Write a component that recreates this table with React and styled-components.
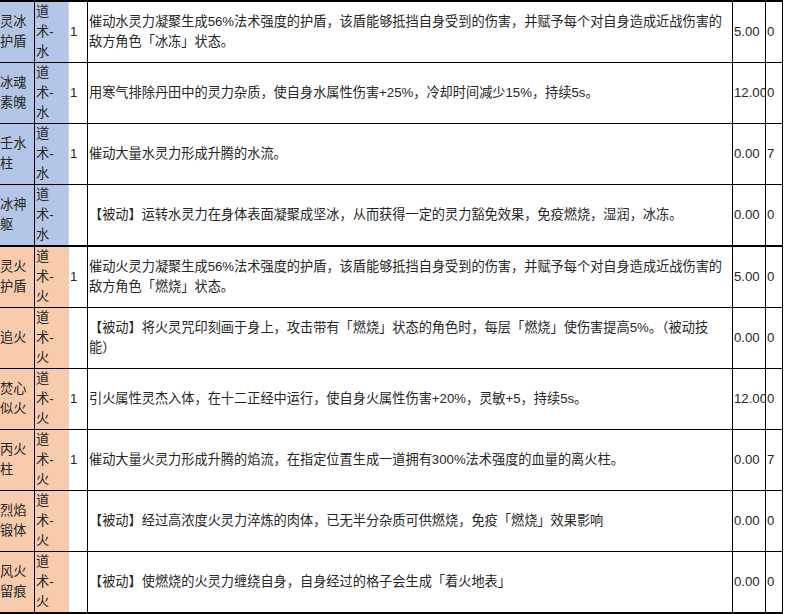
import React from "react";
import styled, { createGlobalStyle } from "styled-components";

const GlobalStyle = createGlobalStyle`
  body {
    margin: 0;
    background: #fff;
  }
`;

const groups = [
  {
    tone: "#B4C6E7",
    element: "水",
    skills: [
      {
        name: ["灵冰", "护盾"],
        level: "1",
        desc: [
          "催动水灵力凝聚生成56%法术强度的护盾，该盾能够抵挡自身受到的伤害，并赋予每个对自身造成近战伤害的",
          "敌方角色「冰冻」状态。",
        ],
        cd: "5.00",
        range: "0",
      },
      {
        name: ["冰魂", "素魄"],
        level: "1",
        desc: ["用寒气排除丹田中的灵力杂质，使自身水属性伤害+25%，冷却时间减少15%，持续5s。"],
        cd: "12.00",
        range: "0",
      },
      {
        name: ["壬水", "柱"],
        level: "1",
        desc: ["催动大量水灵力形成升腾的水流。"],
        cd: "0.00",
        range: "7",
      },
      {
        name: ["冰神", "躯"],
        level: "",
        desc: ["【被动】运转水灵力在身体表面凝聚成坚冰，从而获得一定的灵力豁免效果，免疫燃烧，湿润，冰冻。"],
        cd: "0.00",
        range: "0",
      },
    ],
  },
  {
    tone: "#F8CBAD",
    element: "火",
    skills: [
      {
        name: ["灵火", "护盾"],
        level: "1",
        desc: [
          "催动火灵力凝聚生成56%法术强度的护盾，该盾能够抵挡自身受到的伤害，并赋予每个对自身造成近战伤害的",
          "敌方角色「燃烧」状态。",
        ],
        cd: "5.00",
        range: "0",
      },
      {
        name: ["追火"],
        level: "",
        desc: [
          "【被动】将火灵咒印刻画于身上，攻击带有「燃烧」状态的角色时，每层「燃烧」使伤害提高5%。（被动技",
          "能）",
        ],
        cd: "0.00",
        range: "0",
      },
      {
        name: ["焚心", "似火"],
        level: "1",
        desc: ["引火属性灵杰入体，在十二正经中运行，使自身火属性伤害+20%，灵敏+5，持续5s。"],
        cd: "12.00",
        range: "0",
      },
      {
        name: ["丙火", "柱"],
        level: "1",
        desc: ["催动大量火灵力形成升腾的焰流，在指定位置生成一道拥有300%法术强度的血量的离火柱。"],
        cd: "0.00",
        range: "7",
      },
      {
        name: ["烈焰", "锻体"],
        level: "",
        desc: ["【被动】经过高浓度火灵力淬炼的肉体，已无半分杂质可供燃烧，免疫「燃烧」效果影响"],
        cd: "0.00",
        range: "0",
      },
      {
        name: ["风火", "留痕"],
        level: "",
        desc: ["【被动】使燃烧的火灵力缠绕自身，自身经过的格子会生成「着火地表」"],
        cd: "0.00",
        range: "0",
      },
    ],
  },
];

function Lines({ lines }) {
  return (
    <span>
      {lines.map((line, i) => (
        <React.Fragment key={i}>
          {i > 0 && <br />}
          {line}
        </React.Fragment>
      ))}
    </span>
  );
}

export default function App() {
  return (
    <>
      <GlobalStyle />
      <Sheet>
        {groups.map((group) =>
          group.skills.map((skill, i) => (
            <Row key={skill.name.join("")} $end={i === group.skills.length - 1}>
              <NameCell $tone={group.tone}>
                <Lines lines={skill.name} />
              </NameCell>
              <TypeCell $tone={group.tone}>
                <Lines lines={["道", "术-", group.element]} />
              </TypeCell>
              <Cell>{skill.level}</Cell>
              <DescCell>
                <Lines lines={skill.desc} />
              </DescCell>
              <Cell>{skill.cd}</Cell>
              <Cell>{skill.range}</Cell>
            </Row>
          ))
        )}
      </Sheet>
    </>
  );
}

const Sheet = styled.div`
  width: 783px;
  border-top: 2px solid #000;
  font-family: "Liberation Sans", "Noto Sans CJK SC", sans-serif;
  font-size: 13.2px;
  line-height: 20px;
  color: #262626;
`;

const Row = styled.div`
  display: grid;
  grid-template-columns: 35px 34px 19px 645px 33px 17px;
  box-sizing: border-box;
  height: ${(p) => (p.$end ? 62 : 61)}px;
  border-bottom: ${(p) => (p.$end ? 2 : 1)}px solid #000;
`;

const Cell = styled.div`
  display: flex;
  align-items: center;
  box-sizing: border-box;
  padding-left: 1px;
  border-right: 1px solid #000;
  background: ${(p) => p.$tone || "#fff"};
  white-space: nowrap;
  overflow: hidden;
`;

const NameCell = styled(Cell)`
  padding-left: 0;
`;

const TypeCell = styled(Cell)`
  border-right-color: #d4d4d4;
`;

const DescCell = styled(Cell)`
  padding-left: 1px;
`;
